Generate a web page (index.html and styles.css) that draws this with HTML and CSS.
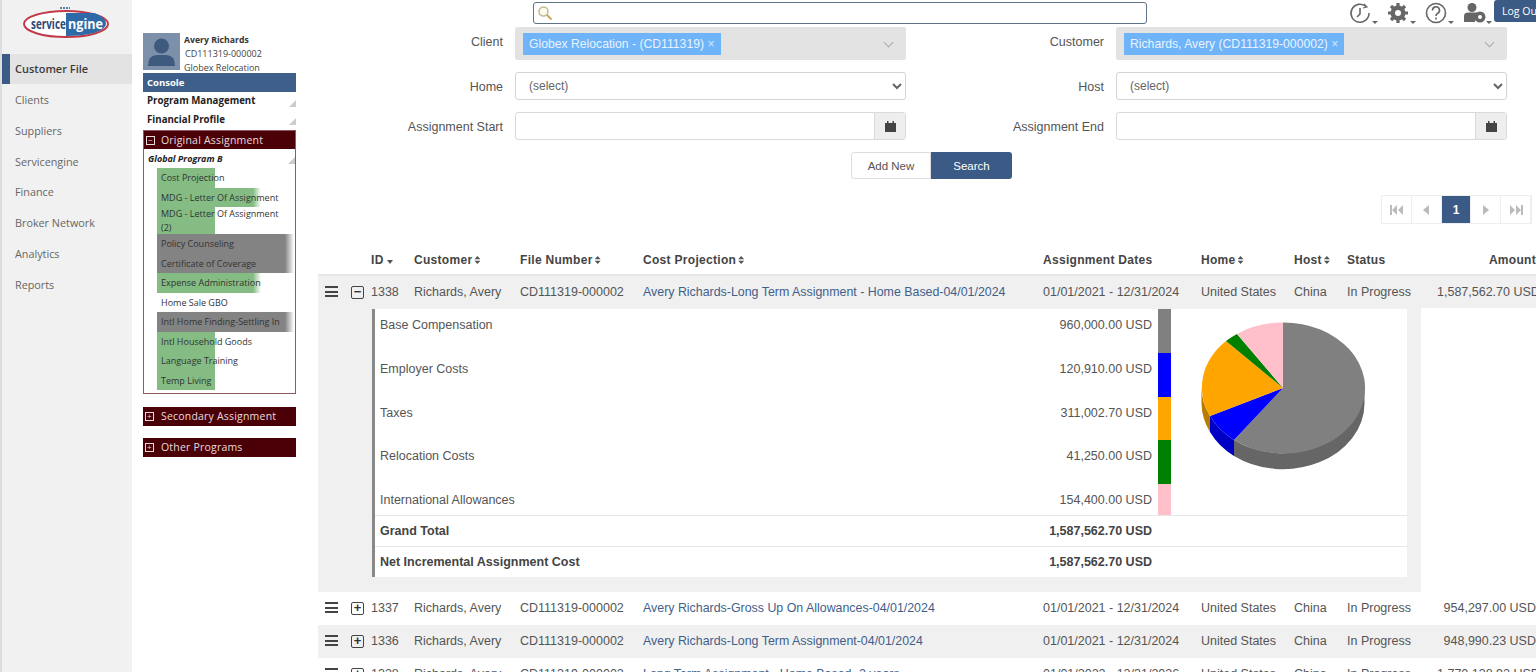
FILE: index.html
```html
<!DOCTYPE html>
<html lang="en">

<head>
    <meta charset="UTF-8">
    <title>Customer File</title>
    <link rel="stylesheet" href="styles.css">
</head>

<body>
    <div class="page">

        <nav class="side-nav">
            <div class="logo">
                <svg width="90" height="34" viewBox="0 0 90 34">
                    <path d="M38 3 H48" stroke="#5b7fa8" stroke-width="2" stroke-dasharray="2 1"/>
                    <ellipse cx="44" cy="19" rx="42" ry="13" fill="#fff" stroke="#c23a48" stroke-width="2"/>
                    <path d="M44 8 H72 Q84 12 84 19 Q84 24 72 28 Q60 31 44 31 Z" fill="#2f6aa8"/>
                    <text transform="translate(9 24) scale(.66 1)" class="logo-a">service</text>
                    <text transform="translate(46 24) scale(.84 1)" class="logo-b">ngine</text>
                </svg>
            </div>
            <a class="nav-item active">Customer File</a>
            <a class="nav-item">Clients</a>
            <a class="nav-item">Suppliers</a>
            <a class="nav-item">Servicengine</a>
            <a class="nav-item">Finance</a>
            <a class="nav-item">Broker Network</a>
            <a class="nav-item">Analytics</a>
            <a class="nav-item">Reports</a>
        </nav>

        <aside class="program-panel">
            <div class="person">
                <div class="avatar">
                    <svg width="37" height="37" viewBox="0 0 37 37">
                        <circle cx="18.5" cy="13" r="7.5" fill="#3f5a7f"/>
                        <path d="M5 33 Q5 22 14 22 H23 Q32 22 32 33 Z" fill="#3f5a7f"/>
                    </svg>
                </div>
                <div class="person-info">
                    <div class="person-name">Avery Richards</div>
                    <div class="person-file">CD111319-000002</div>
                    <div>Globex Relocation</div>
                </div>
            </div>
            <div class="console-bar">Console</div>
            <div class="plain-head">Program Management</div>
            <div class="plain-head">Financial Profile</div>

            <div class="assignment-box">
                <div class="maroon-bar"><span class="box-icon">&#8722;</span>Original Assignment</div>
                <div class="plain-head italic">Global Program B</div>
                <ul class="task-list">
                    <li class="green short">Cost Projection</li>
                    <li class="green long">MDG - Letter Of Assignment</li>
                    <li class="green short">MDG - Letter Of Assignment (2)</li>
                    <li class="grey">Policy Counseling</li>
                    <li class="grey">Certificate of Coverage</li>
                    <li class="green long">Expense Administration</li>
                    <li>Home Sale GBO</li>
                    <li class="grey">Intl Home Finding-Settling In</li>
                    <li class="green short">Intl Household Goods</li>
                    <li class="green short">Language Training</li>
                    <li class="green short">Temp Living</li>
                </ul>
            </div>

            <div class="maroon-bar closed"><span class="box-icon">+</span>Secondary Assignment</div>
            <div class="maroon-bar closed"><span class="box-icon">+</span>Other Programs</div>
        </aside>

        <main class="main">
            <div class="top-bar">
                <div class="search-box">
                    <svg width="16" height="16" viewBox="0 0 16 16">
                        <circle cx="6.5" cy="6.5" r="4.5" fill="#fbfbf0" stroke="#bdbb8c" stroke-width="1.5"/>
                        <path d="M10 10 L14.5 14.5" stroke="#c9a860" stroke-width="2"/>
                    </svg>
                </div>
                <div class="top-icons">
                    <span class="top-icon">
                        <svg width="22" height="22" viewBox="0 0 22 22" fill="none" stroke="#666" stroke-width="1.6">
                            <path d="M17 4.5 A9 9 0 1 0 20 11"/>
                            <path d="M15 2 L18 5 L14 6" stroke-width="1.2"/>
                            <path d="M11 6 V12 L8 15"/>
                        </svg>
                    </span>
                    <span class="top-icon">
                        <svg width="22" height="22" viewBox="0 0 22 22">
                            <circle cx="11" cy="11" r="7.5" fill="#666"/>
                            <path d="M11 1 V21 M1 11 H21 M4 4 L18 18 M18 4 L4 18" stroke="#666" stroke-width="3.2"/>
                            <circle cx="11" cy="11" r="3" fill="#fff"/>
                        </svg>
                    </span>
                    <span class="top-icon">
                        <svg width="22" height="22" viewBox="0 0 22 22" fill="none" stroke="#666" stroke-width="1.6">
                            <circle cx="11" cy="11" r="9.5"/>
                            <path d="M7.5 8.5 A3.5 3.5 0 1 1 12.5 11.5 Q11 12.3 11 14"/>
                            <path d="M11 15.5 V17.5"/>
                        </svg>
                    </span>
                    <span class="top-icon">
                        <svg width="24" height="22" viewBox="0 0 24 22">
                            <circle cx="9" cy="5.5" r="4.5" fill="#666"/>
                            <path d="M1 20 V14 Q1 10.5 5 10.5 H13 Q16 10.5 14 13 L12 20 Z" fill="#666"/>
                            <circle cx="17" cy="15" r="5.5" fill="#666"/>
                            <circle cx="17" cy="15" r="2" fill="#fff"/>
                        </svg>
                    </span>
                    <button class="logout">Log Out</button>
                </div>
            </div>

            <form class="filters">
                <label>Client</label>
                <div class="multi">
                    <span class="tag">Globex Relocation - (CD111319) <span class="tag-x">&times;</span></span>
                    <span class="multi-arrow"></span>
                </div>
                <label>Customer</label>
                <div class="multi">
                    <span class="tag">Richards, Avery (CD111319-000002) <span class="tag-x">&times;</span></span>
                    <span class="multi-arrow"></span>
                </div>

                <label>Home</label>
                <select class="select"><option>(select)</option></select>
                <label>Host</label>
                <select class="select"><option>(select)</option></select>

                <label>Assignment Start</label>
                <div class="date-input">
                    <span class="date-field"></span>
                    <span class="date-btn">
                        <svg width="13" height="13" viewBox="0 0 13 13" fill="#444">
                            <path d="M1 3 H12 V12 H1 Z M3 1 H4.5 V3 H3 Z M8.5 1 H10 V3 H8.5 Z"/>
                        </svg>
                    </span>
                </div>
                <label>Assignment End</label>
                <div class="date-input">
                    <span class="date-field"></span>
                    <span class="date-btn">
                        <svg width="13" height="13" viewBox="0 0 13 13" fill="#444">
                            <path d="M1 3 H12 V12 H1 Z M3 1 H4.5 V3 H3 Z M8.5 1 H10 V3 H8.5 Z"/>
                        </svg>
                    </span>
                </div>
            </form>

            <div class="actions">
                <button class="btn">Add New</button>
                <button class="btn primary">Search</button>
            </div>

            <div class="pager">
                <span class="page-btn"><svg width="14" height="10" viewBox="0 0 14 10" fill="#bbb"><path d="M0 0 H2 V10 H0 Z M7 0 V10 L2 5 Z M13 0 V10 L8 5 Z"/></svg></span>
                <span class="page-btn"><svg width="7" height="10" viewBox="0 0 7 10" fill="#bbb"><path d="M6 0 V10 L0 5 Z"/></svg></span>
                <span class="page-btn current">1</span>
                <span class="page-btn"><svg width="7" height="10" viewBox="0 0 7 10" fill="#bbb"><path d="M1 0 V10 L7 5 Z"/></svg></span>
                <span class="page-btn"><svg width="14" height="10" viewBox="0 0 14 10" fill="#bbb"><path d="M14 0 H12 V10 H14 Z M7 0 V10 L12 5 Z M1 0 V10 L6 5 Z"/></svg></span>
            </div>

            <div class="grid-head row-grid">
                <span class="sort-down">ID</span>
                <span class="sortable">Customer</span>
                <span class="sortable">File Number</span>
                <span class="sortable">Cost Projection</span>
                <span>Assignment Dates</span>
                <span class="sortable">Home</span>
                <span class="sortable">Host</span>
                <span>Status</span>
                <span class="amount">Amount</span>
            </div>

            <div class="data-row row-grid shaded first-row">
                <span class="row-tools">
                    <span class="burger"></span>
                    <span class="expander">&#8722;</span>
                </span>
                <span>1338</span>
                <span>Richards, Avery</span>
                <span>CD111319-000002</span>
                <a class="link">Avery Richards-Long Term Assignment - Home Based-04/01/2024</a>
                <span>01/01/2021 - 12/31/2024</span>
                <span>United States</span>
                <span>China</span>
                <span>In Progress</span>
                <span class="amount">1,587,562.70 USD</span>
            </div>

            <div class="detail">
                <div class="detail-card">
                    <div class="detail-top">
                        <div class="cost-list">
                            <div class="cost-row"><span>Base Compensation</span><span class="cost-val">960,000.00 USD</span><span class="swatch s-grey"></span></div>
                            <div class="cost-row"><span>Employer Costs</span><span class="cost-val">120,910.00 USD</span><span class="swatch s-blue"></span></div>
                            <div class="cost-row"><span>Taxes</span><span class="cost-val">311,002.70 USD</span><span class="swatch s-orange"></span></div>
                            <div class="cost-row"><span>Relocation Costs</span><span class="cost-val">41,250.00 USD</span><span class="swatch s-green"></span></div>
                            <div class="cost-row"><span>International Allowances</span><span class="cost-val">154,400.00 USD</span><span class="swatch s-pink"></span></div>
                        </div>
                        <div class="pie">
                            <svg width="180" height="170" viewBox="0 9 180 170">
                                <!-- sides -->
                                <path d="M169.5 88 V104 A81.5 65.5 0 0 1 39 156 V140 A81.5 65.5 0 0 0 169.5 88 Z" fill="#666"/>
                                <path d="M39 140 V156 A81.5 65.5 0 0 1 15 132 V116 A81.5 65.5 0 0 0 39 140 Z" fill="#0000c4"/>
                                <path d="M15 116 V132 A81.5 65.5 0 0 1 6.5 104 V88 A81.5 65.5 0 0 0 15 116 Z" fill="#b87c00"/>
                                <!-- slices, centre 88,88 -->
                                <path d="M88 88 L88 22.5 A81.5 65.5 0 1 1 39 140 Z" fill="#808080"/>
                                <path d="M88 88 L39 140 A81.5 65.5 0 0 1 15 116 Z" fill="#0000ff"/>
                                <path d="M88 88 L15 116 A81.5 65.5 0 0 1 31 41 Z" fill="#ffa500"/>
                                <path d="M88 88 L31 41 A81.5 65.5 0 0 1 42 34 Z" fill="#008000"/>
                                <path d="M88 88 L42 34 A81.5 65.5 0 0 1 88 22.5 Z" fill="#ffc0cb"/>
                            </svg>
                        </div>
                    </div>
                    <div class="total-row"><span>Grand Total</span><span class="cost-val">1,587,562.70 USD</span></div>
                    <div class="total-row"><span>Net Incremental Assignment Cost</span><span class="cost-val">1,587,562.70 USD</span></div>
                </div>
            </div>

            <div class="data-row row-grid">
                <span class="row-tools">
                    <span class="burger"></span>
                    <span class="expander">+</span>
                </span>
                <span>1337</span>
                <span>Richards, Avery</span>
                <span>CD111319-000002</span>
                <a class="link">Avery Richards-Gross Up On Allowances-04/01/2024</a>
                <span>01/01/2021 - 12/31/2024</span>
                <span>United States</span>
                <span>China</span>
                <span>In Progress</span>
                <span class="amount">954,297.00 USD</span>
            </div>
            <div class="data-row row-grid shaded">
                <span class="row-tools">
                    <span class="burger"></span>
                    <span class="expander">+</span>
                </span>
                <span>1336</span>
                <span>Richards, Avery</span>
                <span>CD111319-000002</span>
                <a class="link">Avery Richards-Long Term Assignment-04/01/2024</a>
                <span>01/01/2021 - 12/31/2024</span>
                <span>United States</span>
                <span>China</span>
                <span>In Progress</span>
                <span class="amount">948,990.23 USD</span>
            </div>
            <div class="data-row row-grid">
                <span class="row-tools">
                    <span class="burger"></span>
                    <span class="expander">+</span>
                </span>
                <span>1328</span>
                <span>Richards, Avery</span>
                <span>CD111319-000002</span>
                <a class="link">Long Term Assignment - Home Based- 2 years</a>
                <span>01/01/2022 - 12/31/2026</span>
                <span>United States</span>
                <span>China</span>
                <span>In Progress</span>
                <span class="amount">1,770,138.92 USD</span>
            </div>
        </main>
    </div>
</body>

</html>
```

FILE: styles.css
```css
html,
body {
    margin: 0;
    height: 672px;
    overflow: hidden;
    background: #fff;
}

body {
    font-family: "Liberation Sans", Arial, sans-serif;
    font-size: 12.5px;
    color: #555;
}

.page {
    display: flex;
    height: 672px;
    overflow: hidden;
}

/* left nav */
.side-nav {
    flex: 0 0 130px;
    border-left: 2px solid #ddd;
    background: #f1f1f1;
    font-family: "Open Sans", sans-serif;
    font-size: 10.8px;
}

.logo {
    height: 54px;
    padding: 5px 0 0 20px;
    box-sizing: border-box;
}

.logo-a,
.logo-b {
    font-family: "Open Sans", sans-serif;
    font-size: 15px;
    font-weight: 700;
}

.logo-a {
    fill: #2b4a78;
}

.logo-b {
    fill: #fff;
}

.nav-item {
    display: block;
    height: 30.8px;
    line-height: 30.8px;
    padding-left: 13px;
    color: #666;
}

.nav-item.active {
    height: 30px;
    line-height: 30px;
    margin-bottom: 1px;
    padding-left: 5px;
    border-left: 8px solid #3b5a85;
    background: #e3e3e3;
    color: #3c3c3c;
    font-size: 11px;
    font-weight: 600;
}

/* program column */
.program-panel {
    flex: 0 0 153px;
    margin-left: 11px;
    padding-top: 33px;
    font-family: "Open Sans", sans-serif;
    font-size: 9px;
    color: #444;
}

.person {
    display: flex;
    gap: 4px;
    height: 40px;
}

.avatar {
    width: 37px;
    height: 37px;
    background: #7d90aa;
}

.person-info {
    line-height: 14px;
}

.person-name {
    font-size: 8.7px;
    font-weight: 700;
    color: #333;
}

.person-file {
    padding-left: 1px;
}

.console-bar {
    height: 19px;
    line-height: 19px;
    padding-left: 4px;
    background: #3f5f8b;
    color: #fff;
    font-weight: 700;
    font-size: 9.5px;
}

.plain-head {
    position: relative;
    height: 18.5px;
    line-height: 18px;
    padding-left: 4px;
    font-weight: 700;
    font-size: 9.7px;
    color: #222;
}

.plain-head::after {
    content: "";
    position: absolute;
    right: 0;
    bottom: 4px;
    border-style: solid;
    border-width: 0 0 7px 7px;
    border-color: transparent transparent #ccc transparent;
}

.plain-head.italic {
    height: 19px;
    line-height: 19px;
    font-style: italic;
    font-size: 9px;
}

.assignment-box {
    margin-top: 1px;
    height: 264px;
    border: 1px solid #8f5a60;
    box-sizing: border-box;
}

.maroon-bar {
    height: 18px;
    line-height: 18px;
    background: #4b0008;
    color: #e6dcdc;
    font-size: 10.5px;
    letter-spacing: 0.2px;
}

.maroon-bar.closed {
    height: 19px;
    line-height: 19px;
    margin-top: 12.5px;
}

.box-icon {
    display: inline-block;
    width: 7px;
    height: 7px;
    line-height: 6px;
    margin: 0 6px 0 2px;
    border: 1px solid #e6dcdc;
    font-size: 8px;
    text-align: center;
    vertical-align: 1px;
}

.closed .box-icon {
    margin-right: 7px;
}

.task-list {
    list-style: none;
    margin: 0;
    padding: 0 0 0 13px;
    line-height: 19.5px;
}

.task-list li {
    padding: 0 0 0 4px;
    color: #333;
}

.task-list li:nth-child(3) {
    line-height: 13.5px;
    padding-right: 8px;
}

.green.short {
    background: linear-gradient(90deg, #84bc84 58px, transparent 58px);
}

.green.long {
    background: linear-gradient(90deg, #84bc84 96px, transparent 104px);
}

.grey {
    background: linear-gradient(90deg, #838383 128px, transparent 137px);
}

/* main column */
.main {
    flex: 1;
    min-width: 0;
    margin-left: 22px;
    overflow: hidden;
}

.top-bar {
    position: relative;
    height: 27px;
}

.search-box {
    position: absolute;
    left: 215px;
    top: 2px;
    width: 612px;
    height: 20px;
    border: 1px solid #5f7286;
    border-radius: 3px;
}

.search-box svg {
    margin: 2px 0 0 3px;
}

.top-icons {
    position: absolute;
    right: 0;
    top: 0;
    display: flex;
    align-items: flex-start;
}

.top-icon {
    position: relative;
    width: 38px;
    padding-top: 2px;
}

.top-icon:nth-child(4) {
    width: 31px;
}

.top-icon::after {
    content: "";
    position: absolute;
    left: 23px;
    top: 21px;
    border-style: solid;
    border-width: 3px 3px 0 3px;
    border-color: #666 transparent transparent transparent;
}

.logout {
    width: 42px;
    height: 22px;
    padding: 0 0 0 8px;
    border: 0;
    border-radius: 3px 0 0 3px;
    background: #3b5a85;
    color: #fff;
    font-family: "Open Sans", sans-serif;
    font-size: 10.5px;
    text-align: left;
    white-space: nowrap;
    overflow: hidden;
}

.filters {
    display: grid;
    grid-template-columns: 185px 391px 186px 391px;
    grid-template-rows: 33px 28px 28px;
    column-gap: 12px;
    row-gap: 12px;
    font-size: 12.5px;
}

.filters label {
    padding-top: 8px;
    text-align: right;
}

.multi {
    display: flex;
    align-items: center;
    justify-content: space-between;
    background: #e3e3e3;
    border-radius: 2px;
    padding-left: 8px;
}

.tag {
    height: 22px;
    line-height: 22px;
    padding: 0 6px;
    background: #6fb3f8;
    color: #e8f3ff;
    font-size: 12.2px;
}

.tag-x {
    color: #d5e8fb;
}

.multi-arrow {
    width: 6px;
    height: 6px;
    margin: -3px 14px 0 0;
    border-right: 1px solid #aaa;
    border-bottom: 1px solid #aaa;
    transform: rotate(45deg);
}

.select {
    height: 28px;
    padding-left: 9px;
    border: 1px solid #d4d4d4;
    border-radius: 3px;
    background: #fff;
    font-family: inherit;
    font-size: 12px;
    color: #666;
}

.date-input {
    display: flex;
    border: 1px solid #d9d9d9;
    border-radius: 3px;
    box-sizing: border-box;
}

.date-field {
    flex: 1;
}

.date-btn {
    display: flex;
    align-items: center;
    justify-content: center;
    width: 30px;
    background: #eee;
    border-left: 1px solid #d9d9d9;
}

.actions {
    display: flex;
    justify-content: flex-start;
    margin: 12px 0 0 533px;
}

.btn {
    width: 80px;
    height: 27px;
    padding: 0;
    border: 1px solid #ddd;
    border-radius: 3px 0 0 3px;
    background: #fff;
    font-family: inherit;
    font-size: 11.5px;
    color: #555;
}

.btn.primary {
    width: 81px;
    border: 0;
    border-radius: 0 3px 3px 0;
    background: #3b5a85;
    color: #fff;
}

.pager {
    display: flex;
    height: 29px;
    margin: 16px 0 0 1063px;
    width: 151px;
    border: 1px solid #eee;
    box-sizing: border-box;
}

.page-btn {
    flex: 1;
    display: flex;
    align-items: center;
    justify-content: center;
    border-right: 1px solid #eee;
}

.page-btn.current {
    flex: 0 0 28px;
    background: #3b5a85;
    color: #fff;
    font-weight: 700;
    font-size: 12px;
}

/* table */
.row-grid {
    display: grid;
    grid-template-columns: 43px 106px 123px 400px 158px 93px 53px 90px 1fr;
    padding-left: 53px;
    white-space: nowrap;
}

.grid-head {
    height: 31px;
    line-height: 30px;
    margin-top: 21px;
    border-bottom: 2px solid #e6e6e6;
    box-sizing: border-box;
    font-weight: 700;
    font-size: 12px;
    letter-spacing: 0.3px;
    color: #444;
}

.sortable::after {
    content: "";
    display: inline-block;
    width: 6px;
    height: 8px;
    margin-left: 2px;
    background-color: #555;
    clip-path: polygon(50% 0, 100% 42%, 50% 42%, 50% 58%, 100% 58%, 50% 100%, 0 58%, 50% 58%, 50% 42%, 0 42%);
}

.sort-down::after {
    content: "";
    display: inline-block;
    margin-left: 3px;
    border-style: solid;
    border-width: 4px 3px 0 3px;
    border-color: #555 transparent transparent transparent;
}

.amount {
    text-align: right;
}

.data-row {
    position: relative;
    height: 33px;
    line-height: 32px;
}

.data-row.shaded {
    background: #f0f0f0;
}

.data-row.first-row {
    height: 32px;
    line-height: 33px;
}

.link {
    color: #3f5f8b;
    font-size: 12.4px;
}

.row-tools {
    position: absolute;
    left: 7px;
    top: 10px;
    display: flex;
    gap: 13px;
}

.burger {
    width: 13px;
    height: 11px;
    background: linear-gradient(#444 0 0) 0 0 / 100% 2px no-repeat, linear-gradient(#444 0 0) 0 50% / 100% 2px no-repeat, linear-gradient(#444 0 0) 0 100% / 100% 2px no-repeat;
}

.expander {
    width: 11px;
    height: 11px;
    border: 1px solid #444;
    border-radius: 2px;
    font-size: 13px;
    font-weight: 700;
    line-height: 10px;
    text-align: center;
    color: #333;
}

.detail {
    width: 1103px;
    height: 284px;
    box-sizing: border-box;
    padding: 1px 14px 15px 54px;
    background: #f0f0f0;
}

.detail-card {
    height: 268px;
    border-left: 3px solid #888;
    background: #fff;
}

.detail-top {
    display: flex;
    height: 206px;
    overflow: hidden;
}

.cost-list {
    width: 796px;
    flex: none;
}

.cost-row {
    display: grid;
    grid-template-columns: 1fr 120px 13px;
    column-gap: 6px;
    height: 43.75px;
    padding-left: 5px;
    line-height: 32px;
}

.cost-val {
    text-align: right;
}

.swatch {
    height: 43.75px;
}

.s-grey { background: #808080; }
.s-blue { background: #0000ff; }
.s-orange { background: #ffa500; }
.s-green { background: #008000; }
.s-pink { background: #ffc0cb; }

.pie svg {
    display: block;
    margin: 0 0 0 24px;
}

.total-row {
    display: grid;
    grid-template-columns: 1fr 120px;
    width: 772px;
    height: 30px;
    padding: 0 255px 0 5px;
    line-height: 30px;
    border-top: 1px solid #e6e6e6;
    font-weight: 700;
    color: #444;
}
```
